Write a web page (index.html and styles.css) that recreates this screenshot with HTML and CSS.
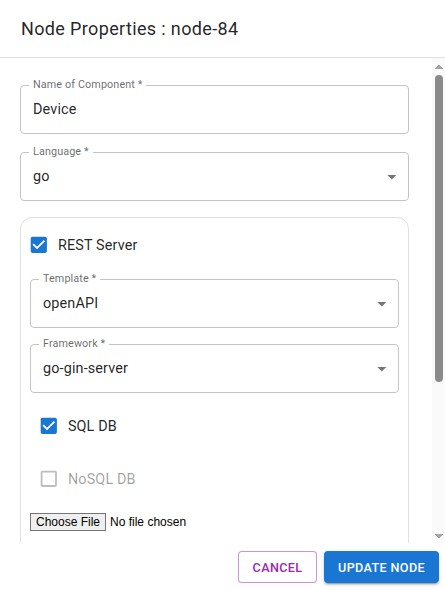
FILE: index.html
```html
<!DOCTYPE html>
<html lang="en">
<head>
<meta charset="utf-8">
<title>Node Properties</title>
<link rel="stylesheet" href="styles.css">
</head>
<body>
<div class="dialog">
  <h2 class="dialog-title">Node Properties : node-84</h2>
  <div class="dialog-body">
    <div class="dialog-content">
      <div class="field field-first">
        <span class="field-label">Name of Component *</span>
        <span class="field-value">Device</span>
      </div>
      <div class="field field-select field-gap">
        <span class="field-label">Language *</span>
        <span class="field-value">go</span>
        <svg class="arrow" viewBox="0 0 24 24"><path d="M7 10l5 5 5-5z"/></svg>
      </div>
      <div class="card">
        <label class="check-row">
          <svg class="check" viewBox="0 0 24 24"><path class="check-on" d="M19 3H5c-1.11 0-2 .9-2 2v14c0 1.1.89 2 2 2h14c1.11 0 2-.9 2-2V5c0-1.1-.89-2-2-2zm-9 14l-5-5 1.41-1.41L10 14.17l7.59-7.59L19 8l-9 9z"/></svg>
          <span class="check-label">REST Server</span>
        </label>
        <div class="field field-select card-field-first">
          <span class="field-label">Template *</span>
          <span class="field-value">openAPI</span>
          <svg class="arrow" viewBox="0 0 24 24"><path d="M7 10l5 5 5-5z"/></svg>
        </div>
        <div class="field field-select card-field">
          <span class="field-label">Framework *</span>
          <span class="field-value">go-gin-server</span>
          <svg class="arrow" viewBox="0 0 24 24"><path d="M7 10l5 5 5-5z"/></svg>
        </div>
        <label class="check-row indent sql-row">
          <svg class="check" viewBox="0 0 24 24"><path class="check-on" d="M19 3H5c-1.11 0-2 .9-2 2v14c0 1.1.89 2 2 2h14c1.11 0 2-.9 2-2V5c0-1.1-.89-2-2-2zm-9 14l-5-5 1.41-1.41L10 14.17l7.59-7.59L19 8l-9 9z"/></svg>
          <span class="check-label">SQL DB</span>
        </label>
        <label class="check-row indent nosql-row disabled">
          <svg class="check" viewBox="0 0 24 24"><path class="check-off" d="M19 5v14H5V5h14m0-2H5c-1.1 0-2 .9-2 2v14c0 1.1.9 2 2 2h14c1.1 0 2-.9 2-2V5c0-1.1-.9-2-2-2z"/></svg>
          <span class="check-label">NoSQL DB</span>
        </label>
        <div class="file-row">
          <input type="file" class="file-input">
        </div>
      </div>
    </div>
    <div class="scrollbar" aria-hidden="true">
      <span class="sb-arrow sb-up"></span>
      <div class="sb-track">
        <span class="sb-thumb"></span>
      </div>
      <span class="sb-arrow sb-down"></span>
    </div>
  </div>
  <div class="dialog-actions">
    <button class="btn btn-outlined">Cancel</button>
    <button class="btn btn-contained">Update Node</button>
  </div>
</div>
</body>
</html>
```

FILE: styles.css
```css
html, body {
  margin: 0;
  padding: 0;
  background: #ffffff;
}

body {
  font-family: Roboto, "Liberation Sans", Arial, sans-serif;
  color: rgba(0, 0, 0, 0.87);
}

.dialog {
  width: 445px;
  height: 590px;
  display: flex;
  flex-direction: column;
  background: #fff;
}

.dialog-title {
  margin: 0;
  padding: 14px 21px 14px 21px;
  font-size: 18px;
  font-weight: 400;
  line-height: 29px;
  letter-spacing: 0.02em;
  color: rgba(0, 0, 0, 0.87);
  border-bottom: 1px solid #e0e0e0;
}

.dialog-body {
  flex: 1;
  min-height: 0;
  display: flex;
}

.dialog-content {
  flex: 1;
  min-width: 0;
  overflow-y: auto;
  scrollbar-width: none;
  padding: 0 23px 18px 20px;
}

/* scrollbar drawn as a column beside the content */
.scrollbar {
  width: 13px;
  flex: none;
  display: flex;
  flex-direction: column;
  align-items: center;
  background: #fafafa;
  padding: 6px 0 4px 1px;
  box-sizing: border-box;
}

.sb-arrow {
  width: 8px;
  height: 5px;
  flex: none;
}

.sb-up {
  background:
    linear-gradient(to bottom right, transparent 50%, #a3a3a3 50%) left / 4px 5px no-repeat,
    linear-gradient(to bottom left, transparent 50%, #a3a3a3 50%) right / 4px 5px no-repeat;
}

.sb-down {
  background:
    linear-gradient(to top right, transparent 50%, #a3a3a3 50%) left / 4px 5px no-repeat,
    linear-gradient(to top left, transparent 50%, #a3a3a3 50%) right / 4px 5px no-repeat;
}

.sb-track {
  flex: 1;
  width: 100%;
  display: flex;
  flex-direction: column;
  align-items: center;
  padding: 6px 0 8px;
  box-sizing: border-box;
}

.sb-thumb {
  width: 8px;
  height: 307px;
  border-radius: 4px;
  background: #8a8a8a;
}

.field {
  position: relative;
  height: 49px;
  box-sizing: border-box;
  border: 1px solid #c4c4c4;
  border-radius: 4px;
  display: flex;
  align-items: center;
  padding: 0 12px 0 12px;
}

.field-first {
  margin-top: 27px;
}

.field-gap {
  margin-top: 18px;
}

.field-label {
  position: absolute;
  top: -7px;
  left: 8px;
  padding: 0 4px;
  background: #fff;
  font-size: 10.8px;
  line-height: 12px;
  color: rgba(0, 0, 0, 0.6);
  letter-spacing: 0.01em;
  white-space: nowrap;
}

.field-value {
  flex: 1;
  font-size: 14.4px;
  letter-spacing: 0.01em;
  color: rgba(0, 0, 0, 0.87);
}

.arrow {
  width: 21.6px;
  height: 21.6px;
  fill: rgba(0, 0, 0, 0.54);
  margin-right: -7px;
}

.card {
  margin-top: 16px;
  border: 1px solid #e0e0e0;
  border-radius: 12px;
  padding: 8px 9px 220px 9px;
}

.check-row {
  display: flex;
  align-items: center;
  height: 38px;
  cursor: pointer;
}

.check {
  width: 21.6px;
  height: 21.6px;
  margin-left: -1.7px;
  flex: none;
}

.check-on {
  fill: #1976d2;
}

.check-off {
  fill: rgba(0, 0, 0, 0.26);
}

.check-label {
  margin-left: 8px;
  font-size: 14.4px;
  letter-spacing: 0.01em;
  color: rgba(0, 0, 0, 0.87);
}

.indent .check {
  margin-left: 8.3px;
}

.disabled .check-label {
  color: rgba(0, 0, 0, 0.38);
}

.card-field-first {
  margin-top: 15px;
}

.card-field {
  margin-top: 16px;
}

.sql-row {
  margin-top: 14px;
}

.nosql-row {
  margin-top: 15px;
}

.file-row {
  margin-top: 13px;
}

.file-input {
  font-family: "Liberation Sans", Arial, sans-serif;
  font-size: 12px;
  color: #000;
}

.file-input::file-selector-button {
  font-family: "Liberation Sans", Arial, sans-serif;
  font-size: 12px;
  color: #000;
  background: #efefef;
  border: 1px solid #767676;
  border-radius: 0;
  padding: 1px 5px;
  margin-right: 4px;
}

.dialog-actions {
  display: flex;
  justify-content: flex-end;
  align-items: center;
  gap: 7px;
  padding: 8px 6px 7px 7px;
}

.btn {
  height: 32px;
  box-sizing: border-box;
  font-family: Roboto, "Liberation Sans", Arial, sans-serif;
  font-size: 12.6px;
  font-weight: 500;
  letter-spacing: 0.03em;
  text-transform: uppercase;
  border-radius: 4px;
  cursor: pointer;
}

.btn-outlined {
  background: #fff;
  color: #9c27b0;
  border: 1px solid rgba(156, 39, 176, 0.5);
  padding: 0 13.5px;
}

.btn-contained {
  background: #1976d2;
  color: #fff;
  border: none;
  padding: 0 14px;
  box-shadow: 0 3px 1px -2px rgba(0, 0, 0, 0.2), 0 2px 2px 0 rgba(0, 0, 0, 0.14), 0 1px 5px 0 rgba(0, 0, 0, 0.12);
}
```
